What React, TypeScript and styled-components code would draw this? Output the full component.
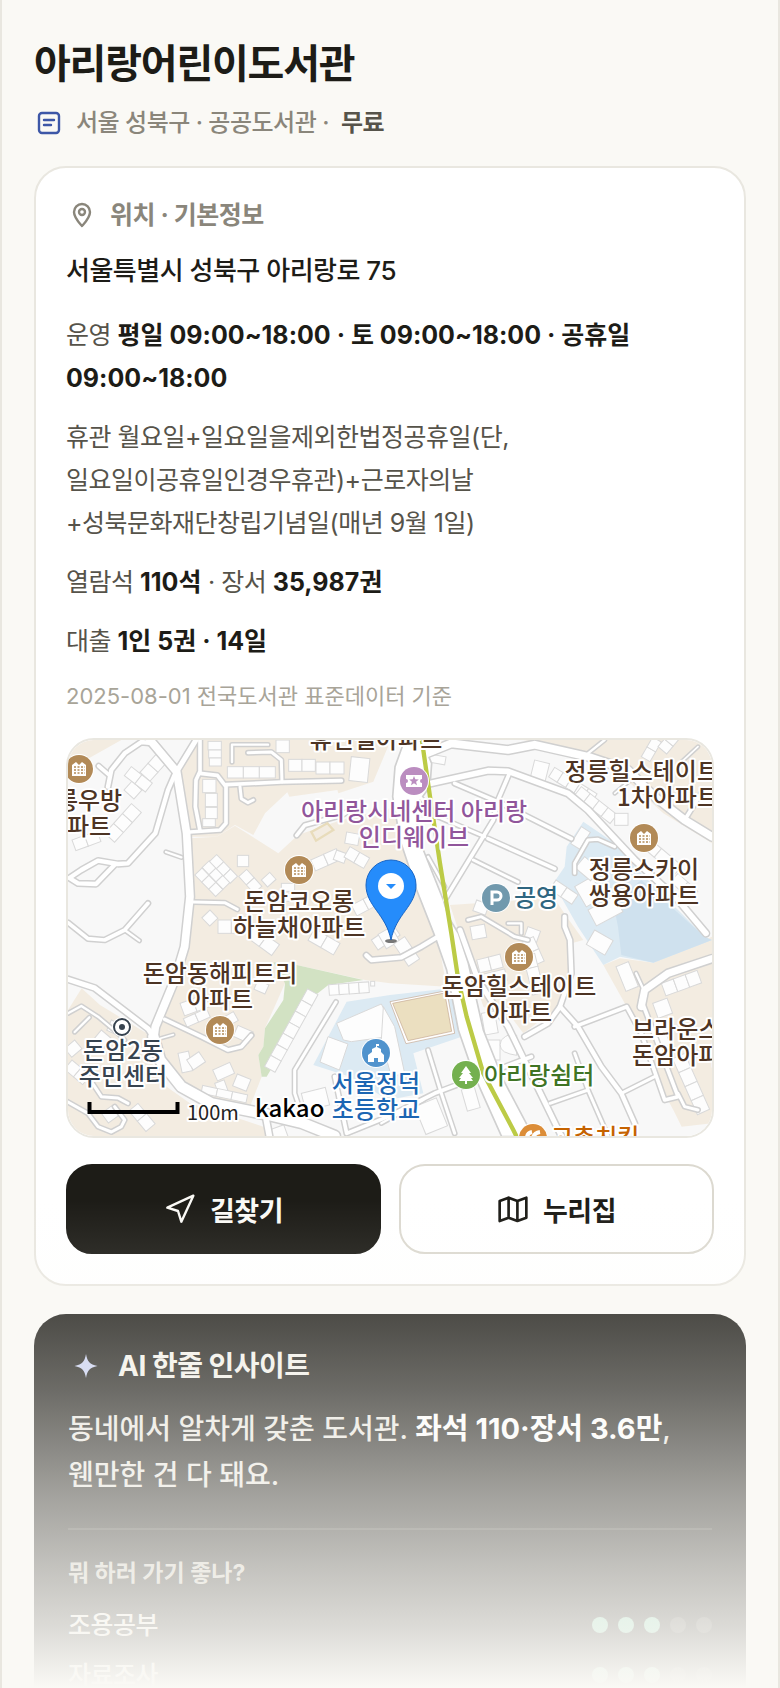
import React from "react";
import styled, { createGlobalStyle } from "styled-components";

const GlobalStyle = createGlobalStyle`
  * { box-sizing: border-box; }
  body {
    margin: 0;
    background: #faf9f5;
    color: #1d1c17;
    font-family: Inter, "Noto Sans CJK KR", sans-serif;
    font-size: 25px;
    letter-spacing: -0.02em;
    word-break: keep-all;
    overflow-wrap: anywhere;
  }
  h1, h2, h3, p, ul { margin: 0; padding: 0; }
`;

const Shell = styled.main`
  position: relative;
  height: 100vh;
  overflow: hidden;
  padding: 40px 32px 0;
  border: 2px solid #e9e7e0;
  border-width: 0 2px;
`;

const Title = styled.h1`
  font-size: 40px;
  line-height: 48px;
  font-weight: 700;
  letter-spacing: -0.03em;
`;

const Meta = styled.p`
  display: flex;
  align-items: center;
  gap: 12px;
  margin-top: 16px;
  font-size: 24px;
  line-height: 38px;
  font-weight: 500;
  color: #8a867b;

  strong { color: #56534a; font-weight: 700; }
`;

const Card = styled.section`
  display: flex;
  flex-direction: column;
  margin-top: 24px;
  padding: 28px 30px 30px;
  background: #fff;
  border: 2px solid #e9e7e0;
  border-radius: 32px;
`;

const CardTitle = styled.h2`
  display: flex;
  align-items: center;
  gap: 12px;
  font-size: 25px;
  line-height: 38px;
  font-weight: 700;
  color: #8a867b;
`;

const Address = styled.p`
  margin-top: 16px;
  font-size: 26px;
  line-height: 42px;
  font-weight: 500;
`;

const Facts = styled.div`
  display: flex;
  flex-direction: column;
  gap: 16px;
  margin-top: 22px;
`;

const Fact = styled.p`
  line-height: 43px;
  color: #56534a;

  strong { color: #1d1c17; font-weight: 700; letter-spacing: 0; }
`;

const Source = styled.p`
  margin-top: 16px;
  font-size: 22px;
  line-height: 34px;
  letter-spacing: 0;
  color: #a8a498;
`;

const MapFrame = styled.div`
  height: 400px;
  margin-top: 25px;
  overflow: hidden;
  border: 2px solid #e9e7e0;
  border-radius: 28px;

  svg { display: block; width: 100%; height: 100%; }
`;

const Actions = styled.div`
  display: grid;
  grid-template-columns: 1fr 1fr;
  gap: 18px;
  margin-top: 26px;
`;

const ActionButton = styled.button<{ $primary?: boolean }>`
  display: flex;
  align-items: center;
  justify-content: center;
  gap: 14px;
  height: 90px;
  padding: 0 20px;
  font: inherit;
  font-size: 27px;
  font-weight: 700;
  letter-spacing: inherit;
  color: ${(p) => (p.$primary ? "#faf9f5" : "#1d1c17")};
  background: ${(p) => (p.$primary ? "#1d1c17" : "#fff")};
  border: 2px solid ${(p) => (p.$primary ? "#1d1c17" : "#dcd9d0")};
  border-radius: 26px;
  cursor: pointer;
`;

const InsightCard = styled.section`
  margin-top: 28px;
  padding: 32px 34px;
  color: #f3f1ea;
  background: #1d1c17;
  border-radius: 32px;
`;

const InsightTitle = styled.h2`
  display: flex;
  align-items: center;
  gap: 16px;
  font-size: 28px;
  line-height: 40px;
  font-weight: 700;
`;

const InsightText = styled.p`
  margin-top: 20px;
  font-size: 28px;
  line-height: 46px;
  font-weight: 500;
  letter-spacing: 0;
  color: #e9e7e0;

  strong { color: #fff; font-size: 29px; font-weight: 700; }
`;

const Purpose = styled.div`
  margin-top: 30px;
  padding-top: 26px;
  border-top: 2px solid #3a3933;
`;

const PurposeTitle = styled.h3`
  font-size: 23px;
  line-height: 34px;
  font-weight: 700;
  letter-spacing: 0;
  color: #c9c6bb;
`;

const Ratings = styled.ul`
  display: flex;
  flex-direction: column;
  gap: 12px;
  margin-top: 16px;
  list-style: none;
`;

const Rating = styled.li`
  display: flex;
  align-items: center;
  justify-content: space-between;
  line-height: 38px;
  font-weight: 500;
`;

const Dots = styled.span`
  display: flex;
  gap: 10px;
`;

const Dot = styled.i<{ $on: boolean }>`
  width: 16px;
  height: 16px;
  border-radius: 50%;
  background: ${(p) => (p.$on ? "#7fd1ae" : "#45443e")};
`;

const Fade = styled.div`
  position: absolute;
  right: 0;
  bottom: 0;
  left: 0;
  height: 488px;
  pointer-events: none;
  background: linear-gradient(
    to bottom,
    rgba(250, 249, 245, 0) 0%,
    rgba(250, 249, 245, 0.08) 11%,
    rgba(250, 249, 245, 0.21) 23%,
    rgba(250, 249, 245, 0.36) 39%,
    rgba(250, 249, 245, 0.61) 61%,
    rgba(250, 249, 245, 0.76) 76%,
    rgba(250, 249, 245, 0.86) 87%,
    rgba(250, 249, 245, 1) 100%
  );
`;

const stroke = {
  fill: "none",
  stroke: "currentColor",
  strokeLinecap: "round" as const,
  strokeLinejoin: "round" as const,
};

const LibraryIcon = () => (
  <svg width="30" height="30" viewBox="0 0 30 30" {...stroke} stroke="#3d57a7" strokeWidth="2.400" aria-hidden="true">
    <rect x="5" y="5" width="20" height="20" rx="3" />
    <path d="M10 12h10M10 17h7" />
  </svg>
);

const PinIcon = () => (
  <svg width="32" height="32" viewBox="0 0 32 32" {...stroke} strokeWidth="2.400" aria-hidden="true">
    <path d="M16 27C12 22.500 8 18.500 8 13a8 8 0 0 1 16 0c0 5.500-4 9.500-8 14z" />
    <circle cx="16" cy="13" r="3" />
  </svg>
);

const RouteIcon = () => (
  <svg width="32" height="32" viewBox="0 0 24 24" {...stroke} strokeWidth="1.800" aria-hidden="true">
    <path d="M22 2 2.500 11l8 2.500L13 21.500z" />
  </svg>
);

const SiteIcon = () => (
  <svg width="32" height="32" viewBox="0 0 24 24" {...stroke} strokeWidth="2" aria-hidden="true">
    <path d="M2 6l6.700-2.500L15.300 6 22 3.500v15L15.300 21l-6.600-2.500L2 21zM8.700 3.500v15M15.300 6v15" />
  </svg>
);

const SparkIcon = () => (
  <svg width="34" height="34" viewBox="0 0 34 34" aria-hidden="true">
    <path d="M18 5c1.500 8 3.500 10 11.500 12C21.500 19 19.500 21 18 29c-1.500-8-3.500-10-11.500-12C14.500 15 16.500 13 18 5z" fill="#c9d1f2" />
  </svg>
);

/* Map geometry is kept on a grid three times finer than the labels. */
const BEIGE = [
  "376,0 351,65 336,100 366,290 446,290 501,255 556,285 591,220 658,157 664,170 808,150 811,160 916,125 960,20 955,0",
  "366,295 446,290 501,257 631,340 690,285 820,240 985,200 1010,320 1060,480 1110,600 1136,740 966,730 891,720 686,675 651,730 591,865 586,920 571,945 581,1010 546,1100 446,1095 346,1060 280,970 266,870 346,650 376,470",
  "0,810 41,745 96,795 236,880 246,960 296,1040 366,1090 526,1140 586,1160 600,1188 0,1188",
  "1366,0 1932,0 1932,310 1786,220 1676,120 1586,60 1476,20",
  "1146,495 1366,480 1456,470 1496,530 1546,600 1511,610 1516,700 1486,790 1366,880 1336,840 1246,800 1171,570",
  "1606,675 1656,655 1756,668 1932,590 1932,1150 1841,1160 1816,1110 1756,1000 1676,800",
  "0,90 160,0 0,0",
];

const WATER = [
  ["1546,245 1656,320 1700,380 1915,595 1932,600 1756,668 1656,650 1606,675 1530,560 1456,430 1490,380 1496,320", "#dceaf3"],
  ["1636,490 1720,420 1910,590 1932,600 1756,668 1660,645 1650,560", "#cfe1ee"],
  ["836,785 966,765 1146,745 1181,890 1036,940 1066,1060 960,1080 846,1010 736,975", "#dceaf3"],
];

const ROADS: [string, number][] = [
  ["M246 0 326 95 356 280 366 470 350 620 320 720 262 860 258 890", 30],
  ["M384 0 326 95", 22],
  ["M120 140 130 90 170 40 220 6 260 10 326 90 300 150 262 280 180 370 150 372 90 362 40 390 4 414 30 430 84 432 140 374", 20],
  ["M92 78 122 104", 18],
  ["M396 0 396 94 384 120 382 200 396 272", 18],
  ["M396 100 448 106 474 140 474 250 456 270 366 276", 18],
  ["M474 134 640 126 820 122", 18],
  ["M642 126 640 60 610 36 540 38", 16],
  ["M492 66 492 14 600 14", 14],
  ["M516 140 520 176 540 188 556 180", 16],
  ["M294 336 340 352", 14],
  ["M376 486 470 488 508 508", 16],
  ["M686 286 710 256 820 226 880 190", 18],
  ["M240 490 170 570 110 600 60 596 0 548", 18],
  ["M170 570 214 602", 14],
  ["M0 718 80 744 240 866 256 890", 22],
  ["M256 890 276 960 340 1040 430 1090 600 1124 700 1148 800 1188", 38],
  ["M290 838 400 890 480 930 520 920 550 886", 18],
  ["M260 900 316 884", 12],
  ["M0 820 40 798 90 830 150 880 170 900", 14],
  ["M20 876 64 832", 14],
  ["M60 1010 100 1070 150 1074 180 1090", 16],
  ["M0 1086 60 1120 90 1160 130 1176 160 1160 170 1140 140 1100", 16],
  ["M592 1124 604 1188", 24],
  ["M804 786 680 990 680 1060 700 1120", 16],
  ["M800 1010 836 1180 960 1130 1100 1060 1390 950", 18],
  ["M895 646 910 660 1000 652 1060 620 1110 590", 20],
  ["M1090 130 1260 92 1320 94 1500 160 1560 210 1700 360 1830 480 1914 580", 24],
  ["M1076 40 1150 10 1320 30 1400 14 1560 50 1680 90 1760 170 1850 240 1932 290", 30],
  ["M1850 240 1900 160 1932 150", 18],
  ["M1560 40 1610 0", 14],
  ["M1700 110 1640 160", 12],
  ["M1836 70 1890 20", 12],
  ["M1326 96 1290 180 1276 240 1130 480", 18],
  ["M1160 130 1300 190 1510 296", 18],
  ["M1046 160 1110 230 1250 290", 16],
  ["M1260 296 1460 386", 18],
  ["M1216 360 1350 426", 16],
  ["M1080 350 1130 440", 14],
  ["M1640 320 1590 298 1560 300 1520 370 1520 400", 16],
  ["M1200 540 1240 530 1340 590 1380 600", 16],
  ["M1320 550 1360 550 1360 580", 14],
  ["M1490 530 1490 560 1506 600 1510 700 1476 800 1440 850 1370 890", 20],
  ["M1176 570 1230 720 1320 860 1480 1188", 22],
  ["M1476 800 1530 860 1600 980 1660 1060 1700 1150", 20],
  ["M1520 860 1676 800 1720 880 1790 1080 1830 1070 1720 780", 18],
  ["M1932 656 1800 700 1730 750 1720 800", 28],
  ["M1704 700 1730 756", 14],
  ["M1446 1090 1560 1050 1520 940", 16],
  ["M1660 1060 1760 1010", 16],
  ["M1830 1060 1850 1100 1890 1110", 16],
  ["M1560 1050 1620 1188", 16],
  ["M1080 930 1120 1060 1160 1180", 16],
  ["M940 1150 1066 1080", 14],
];

/* Each row of houses: x, y, unit width, unit height, count, angle. */
const HOUSES: [number, number, number, number, number, number][] = [
  [168, 150, 36, 40, 4, -48], [190, 80, 40, 34, 2, 38], [110, 280, 40, 40, 3, -48], [12, 300, 40, 34, 2, -20],
  [420, 4, 40, 26, 1, 0], [422, 30, 38, 24, 1, 0], [424, 54, 36, 24, 1, 0],
  [478, 80, 48, 34, 3, 0], [662, 58, 40, 36, 2, 0], [744, 66, 42, 36, 2, 0], [850, 50, 56, 72, 1, 6], [624, 0, 40, 38, 1, 0],
  [404, 118, 40, 40, 1, 0], [412, 160, 36, 40, 1, 0], [412, 202, 36, 34, 1, 0], [404, 236, 38, 24, 1, 0],
  [402, 384, 30, 30, 3, 46], [424, 362, 30, 30, 3, 46], [446, 344, 30, 30, 3, 46], [508, 346, 34, 34, 1, 0],
  [536, 388, 34, 32, 2, 48], [580, 420, 34, 28, 1, -42], [640, 430, 40, 24, 1, 0], [640, 460, 40, 24, 1, 0],
  [728, 360, 42, 36, 2, -24], [806, 330, 34, 30, 1, 20], [836, 276, 40, 34, 1, 10], [846, 320, 34, 36, 2, 30],
  [426, 510, 34, 34, 1, 46], [450, 540, 40, 40, 2, 0], [560, 560, 46, 40, 2, 36], [850, 496, 40, 36, 2, -28],
  [640, 560, 44, 40, 1, -40], [740, 566, 44, 40, 2, 30], [910, 600, 40, 36, 2, -34], [970, 560, 50, 46, 1, 60], [1010, 590, 40, 40, 2, 56],
  [782, 734, 30, 32, 4, -4], [908, 724, 12, 14, 1, 0],
  [750, 764, 38, 36, 7, 119],
  [336, 790, 40, 40, 2, -20], [346, 836, 38, 28, 2, -24], [510, 856, 50, 36, 1, 24], [470, 830, 30, 30, 1, -30], [570, 720, 36, 30, 1, 24],
  [330, 940, 32, 60, 1, -12], [356, 960, 44, 36, 1, -34], [434, 990, 56, 36, 1, -24], [440, 1030, 30, 46, 1, -20], [508, 1002, 44, 38, 1, 22],
  [404, 1036, 46, 24, 3, 12], [20, 900, 34, 40, 1, 50], [100, 870, 40, 36, 1, 40], [12, 960, 36, 36, 2, 40], [130, 840, 50, 34, 1, 24],
  [210, 1090, 40, 36, 2, 50], [100, 1120, 38, 36, 1, -36], [700, 1060, 74, 54, 1, -14], [604, 1170, 46, 40, 1, -20],
  [1016, 30, 60, 24, 2, 10], [1400, 60, 46, 60, 1, 14], [1460, 82, 30, 34, 5, 32], [1540, 140, 34, 34, 4, 38], [1720, 50, 34, 30, 2, -60], [1770, 20, 30, 34, 2, -50],
  [1540, 260, 32, 60, 1, 32], [1520, 440, 60, 70, 1, -30], [1560, 510, 90, 54, 1, -28], [1580, 570, 64, 50, 1, 30], [1464, 420, 40, 34, 2, 34],
  [1550, 350, 60, 44, 1, 40], [1640, 220, 40, 36, 1, 0], [1750, 300, 40, 34, 3, 40], [1830, 400, 40, 34, 2, 42],
  [1206, 560, 44, 40, 1, -10], [1226, 480, 40, 34, 1, 20], [1380, 560, 40, 36, 1, 20], [1396, 590, 40, 36, 2, 66],
  [1226, 660, 36, 40, 2, -14], [1240, 704, 36, 36, 2, -14], [1400, 640, 40, 36, 3, 76], [1240, 820, 40, 66, 1, -10],
  [1644, 680, 40, 80, 1, -22], [1780, 730, 38, 40, 3, -20], [1754, 790, 46, 48, 1, -20], [1780, 840, 40, 40, 2, 70],
  [1850, 940, 46, 40, 4, 66], [1256, 900, 40, 60, 1, 0], [1180, 1050, 40, 66, 1, -16], [1040, 1100, 70, 90, 1, -22],
];

const APARTMENTS = [[11, 29], [231, 130], [152, 290], [451, 217], [576, 98]];

type LabelData = { x: number; y: number; lines: string[]; color: string; anchor?: "start" | "end" };
const BROWN = "#4d3424";
const LABELS: LabelData[] = [
  { x: 308, y: 8, lines: ["휴먼빌아파트"], color: BROWN },
  { x: 346, y: 80, lines: ["아리랑시네센터 아리랑", "인디웨이브"], color: "#91569b" },
  { x: 231, y: 170, lines: ["돈암코오롱", "하늘채아파트"], color: BROWN },
  { x: 152, y: 242, lines: ["돈암동해피트리", "아파트"], color: BROWN },
  { x: 451, y: 255, lines: ["돈암힐스테이트", "아파트"], color: BROWN },
  { x: 576, y: 138, lines: ["정릉스카이", "쌍용아파트"], color: BROWN },
  { x: 651, y: 40, lines: ["정릉힐스테이트", "1차아파트"], color: BROWN, anchor: "end" },
  { x: 10, y: 69, lines: ["정릉우방", "아파트"], color: BROWN },
  { x: 564, y: 298, lines: ["브라운스톤", "돈암아파트"], color: BROWN, anchor: "start" },
  { x: 55, y: 319, lines: ["돈암2동", "주민센터"], color: "#37434f" },
  { x: 308, y: 352, lines: ["서울정덕", "초등학교"], color: "#1c66b3" },
  { x: 446, y: 166, lines: ["공영"], color: "#2f6680", anchor: "start" },
  { x: 416, y: 344, lines: ["아리랑쉼터"], color: "#3f7424", anchor: "start" },
  { x: 483, y: 406, lines: ["고촌치킨"], color: "#c66300", anchor: "start" },
];

const Badge = ({ x, y, color, children }: { x: number; y: number; color: string; children?: React.ReactNode }) => (
  <g transform={`translate(${x} ${y})`}>
    <circle r="15" fill="#fff" />
    <circle r="14" fill={color} />
    {children}
  </g>
);

const MapLabel = styled.text<{ $size?: number; $weight?: number }>`
  font-family: "Noto Sans CJK KR", sans-serif;
  font-size: ${(p) => p.$size ?? 24}px;
  font-weight: ${(p) => p.$weight ?? 500};
  letter-spacing: 0;
  stroke: #fff;
  stroke-width: 4px;
  stroke-linejoin: round;
  paint-order: stroke;
`;

const AreaMap = () => (
  <svg viewBox="0 0 644 396" preserveAspectRatio="xMidYMid slice" role="img" aria-label="아리랑어린이도서관 주변 지도">
    <rect x="-400" width="1444" height="396" fill="#f8f8f8" />
    <g transform="scale(0.33333)">
      {BEIGE.map((p) => <polygon key={p} points={p} fill="#f3ece1" />)}
      {WATER.map(([p, c]) => <polygon key={p} points={p} fill={c} />)}
      <polygon points="616,667 686,675 886,720 781,735 736,770 596,1010 581,1010 571,945 586,920 591,865 646,780 651,730" fill="#d2e2c3" />
      <g fill="#fdfdfd" stroke="#d9d9d9" strokeWidth="3">
        {HOUSES.map(([x, y, w, h, n, a], i) => (
          <g key={i} transform={`translate(${x} ${y}) rotate(${a})`}>
            {Array.from({ length: n }, (_, k) => <rect key={k} x={k * w} width={w} height={h} />)}
          </g>
        ))}
        <polygon points="806,850 940,792 976,860 960,890 850,905 826,900" />
        <polygon points="780,890 840,912 814,990 756,966" />
        <polygon points="946,800 980,860 1010,1000 970,1010 940,900" />
        <path d="M1300 900q26-26 46-14v60l-20-4q-40-10-26-42z" />
      </g>
      <g fill="none" stroke="#d0d0d0" strokeLinejoin="round" strokeLinecap="round">
        {ROADS.map(([d, w]) => <path key={d} d={d} strokeWidth={w + 2} />)}
      </g>
      <path d="M1010 0 981 80 974 170 996 300 1046 450 1101 590 1136 690 1171 870 1216 1000 1301 1190H1396L1306 1020 1246 870 1201 670 1171 580 1141 530 1126 480 1050 290 1041 200 1086 140 1091 70 1061 0z" fill="#fff" stroke="#d0d0d0" strokeWidth="5" />
      <g fill="none" stroke="#fff" strokeLinejoin="round" strokeLinecap="round">
        {ROADS.map(([d, w]) => <path key={d} d={d} strokeWidth={w - 7} />)}
      </g>
      <polygon points="966,785 1136,752 1160,880 1014,911" fill="#fff" stroke="#c4a891" strokeWidth="2" />
      <polygon points="974,790 1130,759 1151,874 1020,902" fill="#ebdfc0" stroke="#c4a891" strokeWidth="2" />
      <polygon points="730,276 778,250 796,270 744,302" fill="#f3ece1" stroke="#e8dcbb" strokeWidth="7" />
      <path d="M1061-4 1086 170 1116 370 1150 580 1171 720 1196 830 1246 1000 1336 1170 1348 1194" fill="none" stroke="#bccb46" strokeWidth="13" />
    </g>

    {APARTMENTS.map(([x, y]) => (
      <Badge key={`${x}-${y}`} x={x} y={y} color="#b28a57">
        <path d="M-7 7V-4l4-3 3 3 3-3 4 3V7z" fill="#fff" />
        <path d="M-5-2H6M-5 1H6M-5 4H6" stroke="#b28a57" strokeWidth="1.500" strokeDasharray="2 1.500" />
      </Badge>
    ))}
    <Badge x={346} y={41} color="#bb8dc0">
      <path d="M-8-6H8v4a2 2 0 0 0 0 4v4H-8V2a2 2 0 0 0 0-4z" fill="#fff" />
      <path d="m0-5 1.300 3.300 3.500.2-2.700 2.200.9 3.500L0 2.300l-3 1.900.9-3.500-2.700-2.200 3.500-.2z" fill="#bb8dc0" />
    </Badge>
    <Badge x={428} y={158} color="#7199ad">
      <path d="M-4 7V-6H1a4 4 0 0 1 0 8H-4" fill="none" stroke="#fff" strokeWidth="3" />
    </Badge>
    <Badge x={398} y={335} color="#74b04f">
      <path d="m0-9 5 7H3l4 5H5l2 3H1v3h-2V6h-6l2-3h-2l4-5h-2z" fill="#fff" />
    </Badge>
    <Badge x={308} y={313} color="#5093cd">
      <path d="M-8 9V2l4-3v-3l4-2v-3h3v2H1v1l4 2v3l3 3v7H2V5h-4v4z" fill="#fff" />
    </Badge>
    <Badge x={465} y={398} color="#dc8d38">
      <path d="M-6 0q0-5 5-6M0 0q1-5 7-6" fill="none" stroke="#fff" strokeWidth="4" />
    </Badge>
    <g transform="translate(54 287)">
      <circle r="10" fill="#fff" />
      <circle r="8" fill="#fff" stroke="#37434f" strokeWidth="2" />
      <circle r="3" fill="#37434f" />
    </g>

    {LABELS.map(({ x, y, lines, color, anchor }) =>
      lines.map((line, i) => (
        <MapLabel key={`${x}-${line}`} x={x} y={y + i * 26} fill={color} textAnchor={anchor ?? "middle"}>
          {line}
        </MapLabel>
      ))
    )}

    <g transform="translate(323 120)">
      <ellipse cy="81" rx="6" ry="2" fill="#777" />
      <path d="M0 80C-5 54-25 46-25 25a25 25 0 0 1 50 0C25 46 5 54 0 80z" fill="#258cfb" stroke="#1765c6" />
      <circle cy="26" r="13" fill="#fff" />
      <path d="M-5 24H5L0 29z" fill="#258cfb" />
    </g>

    <path d="M21.500 362v10h88v-10" fill="none" stroke="#000" strokeWidth="4" />
    <MapLabel x="119" y="380" fill="#222" $size={20} $weight={400}>100m</MapLabel>
    <MapLabel x="187" y="377" fill="#000" $size={24}>kakao</MapLabel>
  </svg>
);

const RATINGS = [
  { name: "조용공부", score: 3 },
  { name: "자료조사", score: 3 },
];

export default function App() {
  return (
    <>
      <GlobalStyle />
      <Shell>
        <Title>아리랑어린이도서관</Title>
        <Meta>
          <LibraryIcon />
          <span>서울 성북구 · 공공도서관 ·</span>
          <strong>무료</strong>
        </Meta>

        <Card>
          <CardTitle><PinIcon />위치 · 기본정보</CardTitle>
          <Address>서울특별시 성북구 아리랑로 75</Address>
          <Facts>
            <Fact>운영 <strong>평일 09:00~18:00 · 토 09:00~18:00 · 공휴일 09:00~18:00</strong></Fact>
            <Fact>휴관 월요일+일요일을제외한법정공휴일(단,<br />일요일이공휴일인경우휴관)+근로자의날<br />+성북문화재단창립기념일(매년 9월 1일)</Fact>
            <Fact>열람석 <strong>110석</strong> · 장서 <strong>35,987권</strong></Fact>
            <Fact>대출 <strong>1인 5권 · 14일</strong></Fact>
          </Facts>
          <Source>2025-08-01 전국도서관 표준데이터 기준</Source>
          <MapFrame><AreaMap /></MapFrame>
          <Actions>
            <ActionButton type="button" $primary><RouteIcon />길찾기</ActionButton>
            <ActionButton type="button"><SiteIcon />누리집</ActionButton>
          </Actions>
        </Card>

        <InsightCard>
          <InsightTitle><SparkIcon />AI 한줄 인사이트</InsightTitle>
          <InsightText>동네에서 알차게 갖춘 도서관. <strong>좌석 110·장서 3.6만</strong>, 웬만한 건 다 돼요.</InsightText>
          <Purpose>
            <PurposeTitle>뭐 하러 가기 좋나?</PurposeTitle>
            <Ratings>
              {RATINGS.map((r) => (
                <Rating key={r.name}>
                  <span>{r.name}</span>
                  <Dots role="img" aria-label={`5점 중 ${r.score}점`}>
                    {[1, 2, 3, 4, 5].map((n) => <Dot key={n} $on={n <= r.score} />)}
                  </Dots>
                </Rating>
              ))}
            </Ratings>
          </Purpose>
        </InsightCard>
        <Fade />
      </Shell>
    </>
  );
}
